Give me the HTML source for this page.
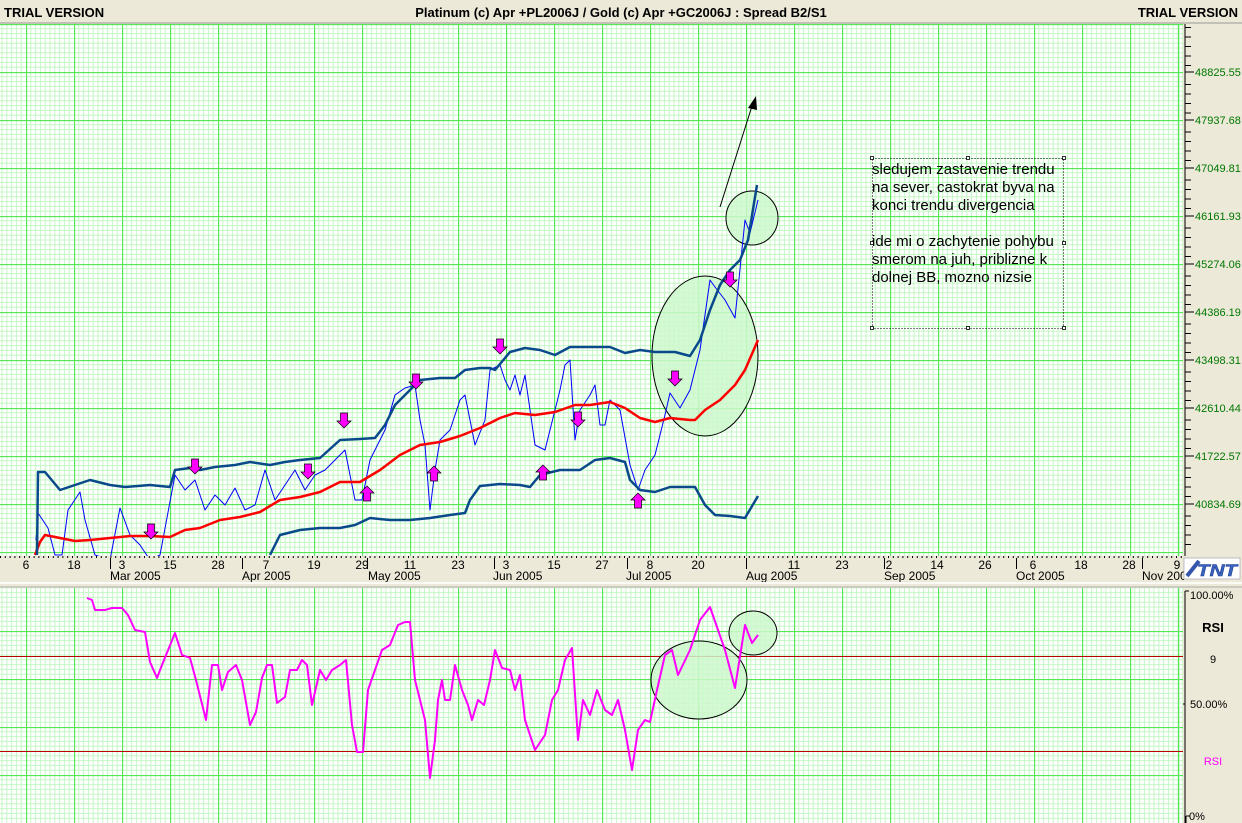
<!DOCTYPE html>
<html><head><meta charset="utf-8"><style>
body{margin:0;width:1242px;height:823px;overflow:hidden;background:#ece9d8;font-family:"Liberation Sans",sans-serif}
svg{display:block}
</style></head><body>
<svg width="1242" height="823" xmlns="http://www.w3.org/2000/svg" font-family="Liberation Sans, sans-serif">
<defs>
<pattern id="g" x="26" y="24" width="48" height="48" patternUnits="userSpaceOnUse">
<rect width="48" height="48" fill="#fff"/>
<path d="M4.8 0V48M9.6 0V48M14.4 0V48M19.2 0V48M24 0V48M28.8 0V48M33.6 0V48M38.4 0V48M43.2 0V48M0 4.8H48M0 9.6H48M0 14.4H48M0 19.2H48M0 24H48M0 28.8H48M0 33.6H48M0 38.4H48M0 43.2H48" stroke="#c4f7c4" stroke-width="1"/>
<path d="M0.5 0V48M0 0.5H48" stroke="#55e855" stroke-width="1.3"/>
</pattern>
<pattern id="g2" x="26" y="631" width="48" height="48" patternUnits="userSpaceOnUse">
<rect width="48" height="48" fill="#fff"/>
<path d="M4.8 0V48M9.6 0V48M14.4 0V48M19.2 0V48M24 0V48M28.8 0V48M33.6 0V48M38.4 0V48M43.2 0V48M0 4.8H48M0 9.6H48M0 14.4H48M0 19.2H48M0 24H48M0 28.8H48M0 33.6H48M0 38.4H48M0 43.2H48" stroke="#c4f7c4" stroke-width="1"/>
<path d="M0.5 0V48M0 0.5H48" stroke="#55e855" stroke-width="1.3"/>
</pattern>
<g id="dn"><path d="M-3.5 -8H3.5V0H7L0 7L-7 0H-3.5Z" fill="#ff00ff" stroke="#000" stroke-width="0.7"/></g>
<g id="up"><path d="M-3.5 8H3.5V0H7L0 -7L-7 0H-3.5Z" fill="#ff00ff" stroke="#000" stroke-width="0.7"/></g>
</defs>
<rect x="0" y="0" width="1242" height="23" fill="#ece9d8"/>
<line x1="0" y1="23" x2="1242" y2="23" stroke="#999"/>
<text x="4" y="17" font-size="13" font-weight="bold">TRIAL VERSION</text>
<text x="621" y="17" font-size="13" font-weight="bold" text-anchor="middle">Platinum (c) Apr +PL2006J / Gold (c) Apr +GC2006J : Spread B2/S1</text>
<text x="1238" y="17" font-size="13" font-weight="bold" text-anchor="end">TRIAL VERSION</text>
<rect x="0" y="24" width="1183" height="532" fill="url(#g)"/>
<line x1="1178.5" y1="24" x2="1178.5" y2="556" stroke="#55e855" stroke-width="1.3"/>
<g font-size="11" fill="#007700">
<path d="M1185 24V556" stroke="#000"/>
<path d="M1185 27.5h6M1185 37h6M1185 46.5h6M1185 56h6M1185 65.5h6M1185 84.5h6M1185 94h6M1185 103.5h6M1185 113h6M1185 132h6M1185 141.5h6M1185 151h6M1185 160.5h6M1185 180h6M1185 189.5h6M1185 199h6M1185 208.5h6M1185 228h6M1185 237.5h6M1185 247h6M1185 256.5h6M1185 276h6M1185 285.5h6M1185 295h6M1185 304.5h6M1185 324h6M1185 333.5h6M1185 343h6M1185 352.5h6M1185 372h6M1185 381.5h6M1185 391h6M1185 400.5h6M1185 420h6M1185 429.5h6M1185 439h6M1185 448.5h6M1185 468h6M1185 477.5h6M1185 487h6M1185 496.5h6M1185 516h6M1185 525.5h6M1185 535h6M1185 544.5h6" stroke="#000"/>
<path d="M1185 72h9M1185 120h9M1185 168h9M1185 216h9M1185 264h9M1185 312h9M1185 360h9M1185 408h9M1185 456h9M1185 504h9" stroke="#000"/>
<text x="1195" y="76">48825.55</text><text x="1195" y="124">47937.68</text><text x="1195" y="172">47049.81</text><text x="1195" y="220">46161.93</text><text x="1195" y="268">45274.06</text><text x="1195" y="316">44386.19</text><text x="1195" y="364">43498.31</text><text x="1195" y="412">42610.44</text><text x="1195" y="460">41722.57</text><text x="1195" y="508">40834.69</text>
</g>
<ellipse cx="705" cy="356" rx="53" ry="80" fill="#ccf8cc" fill-opacity="0.85" stroke="#000"/>
<ellipse cx="752" cy="218" rx="26" ry="27" fill="#ccf8cc" fill-opacity="0.85" stroke="#000"/>
<g fill="none" stroke-linejoin="round">
<polyline stroke="#0000ff" stroke-width="1" points="36,540 38,513 48,528 55,555 62,555 68,510 80,492 85,520 95,555 110,560 120,508 130,535 140,545 150,560 160,555 175,475 185,490 195,480 205,510 215,495 225,505 235,488 245,510 255,505 265,470 275,500 285,485 295,470 305,490 315,475 325,470 335,460 345,450 355,500 362,500 370,460 385,430 395,395 405,388 415,385 420,420 425,445 430,510 435,470 440,440 450,430 460,400 465,395 475,445 485,420 490,370 500,365 505,380 510,390 515,375 520,395 525,375 535,445 545,450 550,430 560,390 565,365 570,360 575,440 580,410 590,395 595,385 600,425 605,425 610,400 620,410 630,465 638,490 645,470 655,455 665,415 670,393 680,408 690,390 700,350 710,280 715,287 725,300 735,318 745,220 750,233 758,200"/>
<polyline stroke="#ff0000" stroke-width="2.5" points="35,555 40,542 45,535 60,538 75,541 90,540 110,538 130,536 150,536 170,537 185,530 200,528 220,520 240,517 260,512 280,500 300,497 320,492 340,482 360,482 380,470 400,455 420,445 440,442 460,436 480,428 500,418 515,413 535,415 555,412 575,405 590,405 610,402 625,408 640,418 655,422 670,418 690,420 695,420 705,410 720,400 735,385 745,370 758,340"/>
<polyline stroke="#0a4a8a" stroke-width="2.5" points="37,555 38,472 45,472 60,490 75,485 90,480 110,485 125,487 150,485 170,487 175,470 190,468 200,470 215,467 235,465 250,462 270,465 285,462 300,460 320,458 340,440 360,439 375,438 385,425 395,405 410,390 420,380 440,378 455,378 465,370 480,368 490,368 495,370 510,352 525,348 540,350 555,355 570,347 590,347 610,347 625,353 640,350 655,352 675,352 690,356 700,340 710,310 720,285 730,270 740,260 748,240 757,185"/>
<polyline stroke="#0a4a8a" stroke-width="2.5" points="270,555 280,535 300,530 320,528 340,528 355,525 370,518 390,520 410,520 430,518 450,515 465,513 470,500 480,486 500,484 520,485 530,487 540,475 560,470 580,470 595,460 610,458 625,462 630,480 640,490 655,492 670,487 695,487 705,505 715,515 730,516 745,518 758,496"/>
</g>
<use href="#dn" x="151" y="532"/><use href="#dn" x="195" y="467"/><use href="#dn" x="308" y="472"/><use href="#dn" x="344" y="421"/><use href="#dn" x="416" y="382"/><use href="#dn" x="500" y="347"/><use href="#dn" x="578" y="420"/><use href="#dn" x="675" y="379"/><use href="#dn" x="730" y="280"/>
<use href="#up" x="367" y="493"/><use href="#up" x="434" y="473"/><use href="#up" x="543" y="472"/><use href="#up" x="638" y="500"/>
<line x1="720" y1="207" x2="752" y2="106" stroke="#000" stroke-width="1"/>
<path d="M756 96L748 108L757 110Z" fill="#000"/>
<rect x="872.5" y="158.5" width="191" height="170" fill="none" stroke="#000" stroke-dasharray="1,2"/>
<g fill="#fff" stroke="#000" stroke-width="0.8"><rect x="870.5" y="156.5" width="3" height="3"/><rect x="966.5" y="156.5" width="3" height="3"/><rect x="1062.5" y="156.5" width="3" height="3"/><rect x="870.5" y="241.5" width="3" height="3"/><rect x="1062.5" y="241.5" width="3" height="3"/><rect x="870.5" y="326.5" width="3" height="3"/><rect x="966.5" y="326.5" width="3" height="3"/><rect x="1062.5" y="326.5" width="3" height="3"/></g>
<g font-size="15" fill="#000"><text x="872" y="174">sledujem zastavenie trendu</text><text x="872" y="192">na sever, castokrat byva na</text><text x="872" y="210">konci trendu divergencia</text><text x="872" y="246">ide mi o zachytenie pohybu</text><text x="872" y="264">smerom na juh, priblizne k</text><text x="872" y="282">dolnej BB, mozno nizsie</text></g>
<rect x="0" y="556" width="1185" height="26" fill="#ece9d8"/>
<line x1="0" y1="557" x2="1183" y2="557" stroke="#000" stroke-width="2" stroke-dasharray="1,3.8"/>
<g stroke="#000"><line x1="110.5" y1="558" x2="110.5" y2="569"/><line x1="242.5" y1="558" x2="242.5" y2="569"/><line x1="367.5" y1="558" x2="367.5" y2="569"/><line x1="494.5" y1="558" x2="494.5" y2="569"/><line x1="627.5" y1="558" x2="627.5" y2="569"/><line x1="746.5" y1="558" x2="746.5" y2="569"/><line x1="884.5" y1="558" x2="884.5" y2="569"/><line x1="1016.5" y1="558" x2="1016.5" y2="569"/><line x1="1142.5" y1="558" x2="1142.5" y2="569"/></g>
<g font-size="12" text-anchor="middle"><text x="26" y="569">6</text><text x="74" y="569">18</text><text x="122" y="569">3</text><text x="170" y="569">15</text><text x="218" y="569">28</text><text x="266" y="569">7</text><text x="314" y="569">19</text><text x="362" y="569">29</text><text x="410" y="569">11</text><text x="458" y="569">23</text><text x="506" y="569">3</text><text x="554" y="569">15</text><text x="602" y="569">27</text><text x="650" y="569">8</text><text x="698" y="569">20</text><text x="794" y="569">11</text><text x="842" y="569">23</text><text x="889" y="569">2</text><text x="937" y="569">14</text><text x="985" y="569">26</text><text x="1033" y="569">6</text><text x="1081" y="569">18</text><text x="1129" y="569">28</text><text x="1177" y="569">9</text></g>
<g font-size="12"><text x="110" y="580">Mar 2005</text><text x="242" y="580">Apr 2005</text><text x="368" y="580">May 2005</text><text x="493" y="580">Jun 2005</text><text x="626" y="580">Jul 2005</text><text x="746" y="580">Aug 2005</text><text x="884" y="580">Sep 2005</text><text x="1016" y="580">Oct 2005</text><text x="1142" y="580">Nov 2005</text></g>
<rect x="1184" y="556" width="58" height="26" fill="#ece9d8"/>
<rect x="1184" y="558" width="56" height="21" fill="#fff" stroke="#99a" stroke-width="0.6"/>
<path d="M1187 576L1199 561" stroke="#3355aa" stroke-width="4"/>
<text x="1197" y="576" font-size="17" font-weight="bold" font-style="italic" fill="#3a64c0" stroke="#1a3a90" stroke-width="0.5" textLength="40" lengthAdjust="spacingAndGlyphs">TNT</text>
<rect x="0" y="582" width="1242" height="6" fill="#ece9d8"/>
<line x1="0" y1="583" x2="1242" y2="583" stroke="#fff" stroke-width="1.5"/>
<line x1="0" y1="587" x2="1242" y2="587" stroke="#aaa"/>
<rect x="0" y="588" width="1183" height="235" fill="url(#g2)"/>
<line x1="1178.5" y1="588" x2="1178.5" y2="823" stroke="#55e855" stroke-width="1.3"/>
<line x1="0" y1="656.5" x2="1183" y2="656.5" stroke="#bb0000"/>
<line x1="0" y1="751.5" x2="1183" y2="751.5" stroke="#bb0000"/>
<path d="M1185 591V823M1185 591h4M1185 704h-2" stroke="#000"/>
<path d="M1186 816h4M1186 816v7" stroke="#000"/>
<g font-size="11"><text x="1190" y="599">100.00%</text><text x="1190" y="708">50.00%</text><text x="1189" y="820">0%</text><text x="1213" y="663" text-anchor="middle">9</text><text x="1213" y="765" text-anchor="middle" fill="#ff00ff">RSI</text></g>
<text x="1213" y="632" text-anchor="middle" font-size="13" font-weight="bold">RSI</text>
<ellipse cx="699" cy="680" rx="48" ry="39" fill="#ccf8cc" fill-opacity="0.85" stroke="#000"/>
<ellipse cx="753" cy="633" rx="24" ry="22" fill="#ccf8cc" fill-opacity="0.85" stroke="#000"/>
<polyline fill="none" stroke="#ff00ff" stroke-width="2" stroke-linejoin="round" points="87,598 92,600 95,610 105,610 112,608 122,608 128,615 135,630 145,632 150,662 157,678 162,665 175,633 182,655 190,658 196,680 206,720 212,665 218,665 222,690 228,672 236,665 242,680 250,725 256,712 262,678 267,665 272,665 277,703 285,697 290,670 297,670 302,660 307,665 312,705 320,670 326,680 332,670 340,665 346,660 352,725 357,752 363,752 368,690 375,670 382,650 390,645 398,625 405,622 410,622 415,680 420,700 425,720 430,778 435,740 438,700 442,680 445,700 450,700 455,665 462,690 468,705 472,720 478,700 484,705 490,680 495,650 502,668 510,670 515,690 520,675 525,720 535,750 545,735 552,700 558,690 565,660 572,648 578,740 583,700 590,715 597,690 605,710 612,715 618,700 625,730 632,770 638,730 645,720 650,722 657,690 665,655 672,650 678,675 690,650 700,620 710,607 718,630 725,650 735,688 745,625 752,643 758,635"/>
</svg>
</body></html>
